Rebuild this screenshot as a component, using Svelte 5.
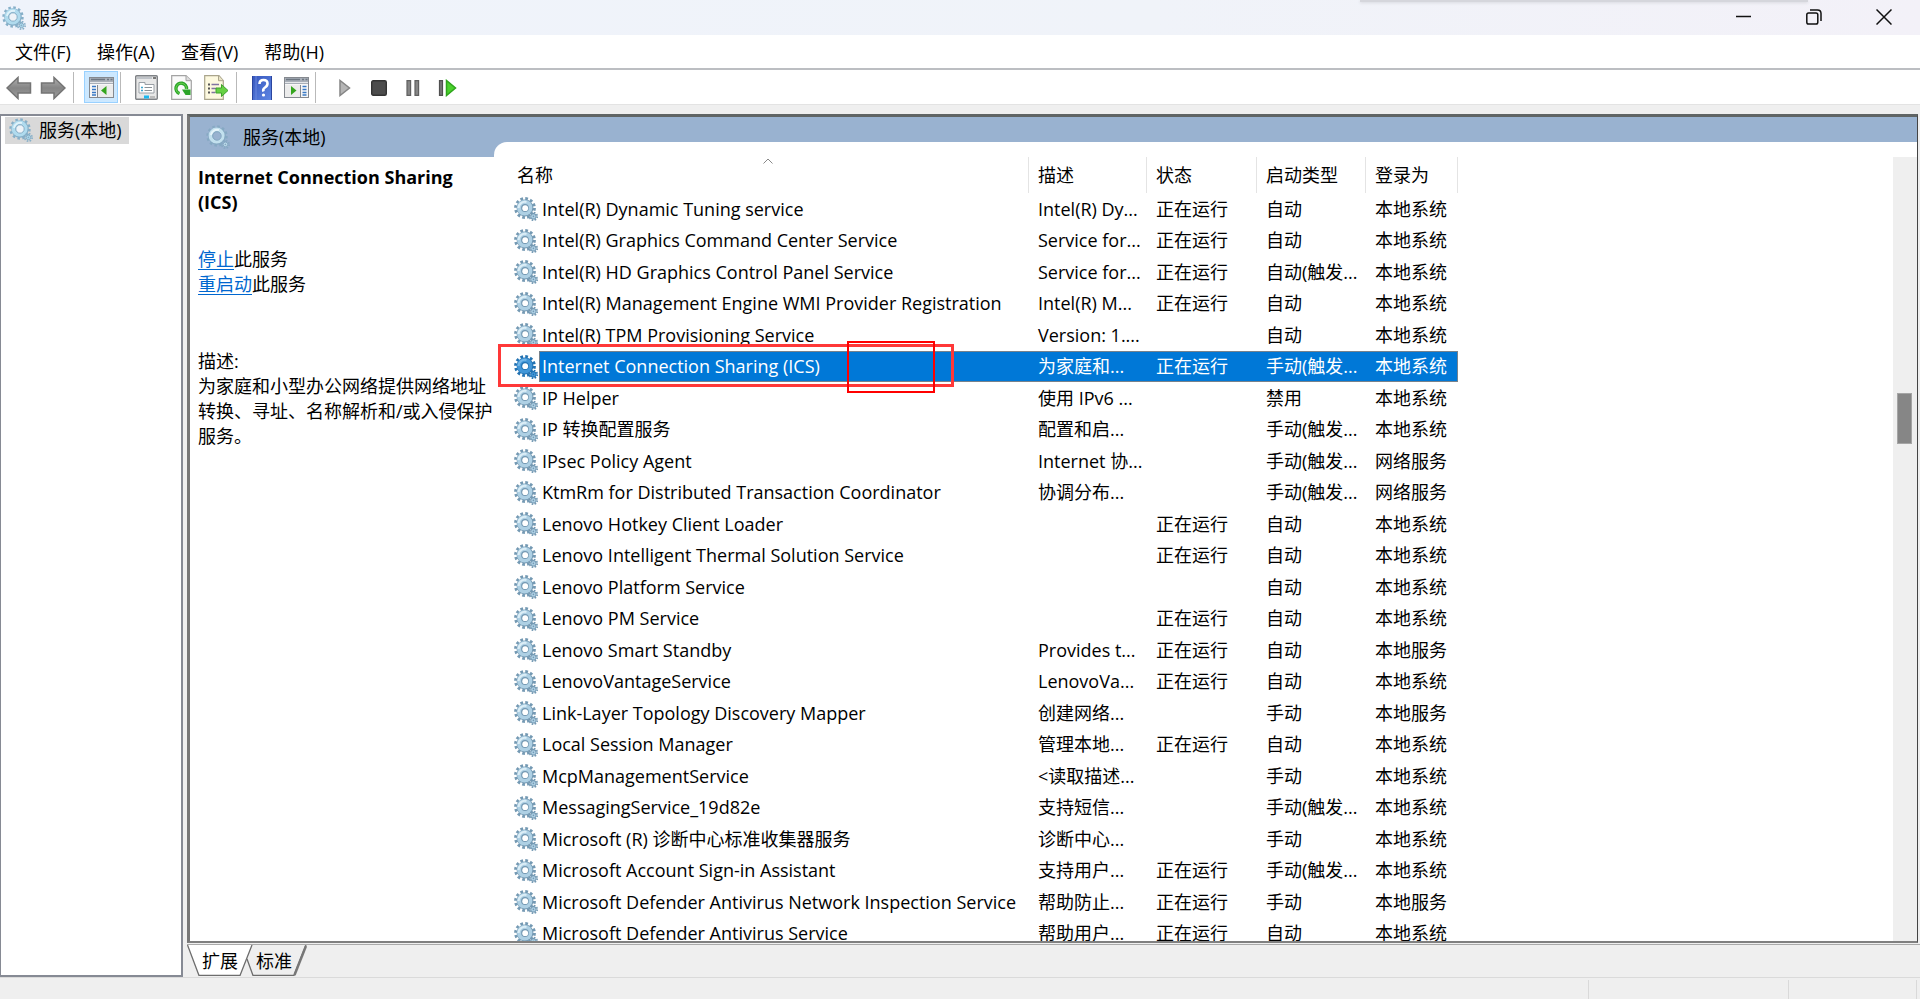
<script>
  const RUN = '正在运行';
  const SYS = '本地系统';
  const NET = '网络服务';
  const LOC = '本地服务';
  const AUTO = '自动';
  const MAN = '手动';
  const MANT = '手动(触发...';

  const services = [
    ['Intel(R) Dynamic Tuning service', 'Intel(R) Dy...', RUN, AUTO, SYS],
    ['Intel(R) Graphics Command Center Service', 'Service for...', RUN, AUTO, SYS],
    ['Intel(R) HD Graphics Control Panel Service', 'Service for...', RUN, '自动(触发...', SYS],
    ['Intel(R) Management Engine WMI Provider Registration', 'Intel(R) M...', RUN, AUTO, SYS],
    ['Intel(R) TPM Provisioning Service', 'Version: 1....', '', AUTO, SYS],
    ['Internet Connection Sharing (ICS)', '为家庭和...', RUN, MANT, SYS],
    ['IP Helper', '使用 IPv6 ...', '', '禁用', SYS],
    ['IP 转换配置服务', '配置和启...', '', MANT, SYS],
    ['IPsec Policy Agent', 'Internet 协...', '', MANT, NET],
    ['KtmRm for Distributed Transaction Coordinator', '协调分布...', '', MANT, NET],
    ['Lenovo Hotkey Client Loader', '', RUN, AUTO, SYS],
    ['Lenovo Intelligent Thermal Solution Service', '', RUN, AUTO, SYS],
    ['Lenovo Platform Service', '', '', AUTO, SYS],
    ['Lenovo PM Service', '', RUN, AUTO, SYS],
    ['Lenovo Smart Standby', 'Provides t...', RUN, AUTO, LOC],
    ['LenovoVantageService', 'LenovoVa...', RUN, AUTO, SYS],
    ['Link-Layer Topology Discovery Mapper', '创建网络...', '', MAN, LOC],
    ['Local Session Manager', '管理本地...', RUN, AUTO, SYS],
    ['McpManagementService', '<读取描述...', '', MAN, SYS],
    ['MessagingService_19d82e', '支持短信...', '', MANT, SYS],
    ['Microsoft (R) 诊断中心标准收集器服务', '诊断中心...', '', MAN, SYS],
    ['Microsoft Account Sign-in Assistant', '支持用户...', RUN, MANT, SYS],
    ['Microsoft Defender Antivirus Network Inspection Service', '帮助防止...', RUN, MAN, LOC],
    ['Microsoft Defender Antivirus Service', '帮助用户...', RUN, AUTO, SYS]
  ];
  const selected = 5;
  const menus = ['文件(F)', '操作(A)', '查看(V)', '帮助(H)'];
</script>

{#snippet gear(kind)}<svg class="gear {kind}" viewBox="0 0 24 24" aria-hidden="true"><use href={kind === 'soft' || kind === 'faint' ? '#gear-ring' : '#gear'} /></svg>{/snippet}

<svg class="defs" aria-hidden="true">
  <defs>
    <linearGradient id="metal" x1="0" y1="0" x2="0" y2="1">
      <stop offset="0" stop-color="#b0b0b0" /><stop offset=".5" stop-color="#858585" /><stop offset="1" stop-color="#9d9d9d" />
    </linearGradient>
    <linearGradient id="blue" x1="0" y1="0" x2="1" y2="1">
      <stop offset="0" stop-color="#3656bd" /><stop offset="1" stop-color="#5f87e4" />
    </linearGradient>
    <symbol id="gear" viewBox="0 0 24 24">
      <circle cx="11" cy="11" r="9.4" fill="none" stroke="var(--edge)" stroke-width="3" stroke-dasharray="2.7 2.22" />
      <circle cx="11" cy="11" r="8.4" fill="var(--edge)" />
      <circle cx="10.700" cy="10.700" r="7.700" fill="var(--body)" />
      <path d="M4.500 11a6.300 6.300 0 0 1 8-6" fill="none" stroke="var(--shine)" stroke-width="2.200" />
      <circle cx="11" cy="11" r="3.900" fill="var(--edge)" />
      <circle cx="11.200" cy="11.200" r="2.900" fill="var(--hole)" />
      <circle cx="19.400" cy="19.400" r="3.800" fill="none" stroke="var(--edge)" stroke-width="1.800" stroke-dasharray="1.600 1.380" />
      <circle cx="19.400" cy="19.400" r="3.100" fill="var(--edge)" />
      <circle cx="19.400" cy="19.400" r="2.200" fill="var(--body)" />
      <circle cx="19.400" cy="19.400" r=".8" fill="var(--edge)" />
    </symbol>
    <symbol id="gear-ring" viewBox="0 0 24 24">
      <circle cx="11" cy="11" r="9.400" fill="none" stroke="var(--edge)" stroke-width="2.600" stroke-dasharray="2.500 2.420" />
      <circle cx="11" cy="11" r="6.400" fill="none" stroke="var(--edge)" stroke-width="4.800" />
      <circle cx="10.600" cy="10.600" r="6.200" fill="none" stroke="var(--body)" stroke-width="3.600" />
      <path d="M5 10a6.300 6.300 0 0 1 8-5" fill="none" stroke="var(--shine)" stroke-width="2" />
      <circle cx="11" cy="11" r="4.200" fill="var(--hole)" stroke="var(--edge)" />
      <circle cx="19.400" cy="19.400" r="3.700" fill="none" stroke="var(--edge)" stroke-width="1.800" stroke-dasharray="1.600 1.300" />
      <circle cx="19.400" cy="19.400" r="2.300" fill="var(--body)" stroke="var(--edge)" />
      <circle cx="19.400" cy="19.400" r=".9" fill="var(--edge)" />
    </symbol>
  </defs>
</svg>

<div class="window">
  <header class="titlebar">
    <span class="shade"></span>
    {@render gear('soft')}
    <h1>服务</h1>
    <div class="controls">
      <button aria-label="最小化"><svg width="16" height="16"><path d="M0 7.500h15" /></svg></button>
      <button aria-label="还原"><svg width="16" height="16"><rect x=".8" y="4" width="11" height="11" rx="1.800" /><path d="M4 1h7.500q3.500 0 3.500 3.500V12" /></svg></button>
      <button aria-label="关闭"><svg width="16" height="16"><path d="M.5 .5l15 15M15.500 .5l-15 15" /></svg></button>
    </div>
  </header>

  <nav class="menubar">
    {#each menus as m}<button>{m}</button>{/each}
  </nav>

  <div class="toolbar" role="toolbar">
    <button aria-label="后退"><svg width="26" height="24" viewBox="0 0 26 24"><path d="M1 12L12 1.500V7h12.500v10H12v5.500z" fill="url(#metal)" stroke="#747474" stroke-width="1.500" /></svg></button>
    <button aria-label="前进"><svg width="26" height="24" viewBox="0 0 26 24"><path d="M25 12L14 1.500V7H1.500v10H14v5.500z" fill="url(#metal)" stroke="#747474" stroke-width="1.500" /></svg></button>
    <i></i>
    <button class="on" aria-label="显示/隐藏控制台树">
      <svg width="25" height="21" viewBox="0 0 25 21"><rect x=".5" y=".5" width="24" height="20" fill="#f7f7f7" stroke="#85898f" /><rect x="1" y="1" width="23" height="6" fill="#a9afb8" /><path d="M2 2.500h14M18 2.500h2M21.500 2.500h2" stroke="#6e7782" stroke-width="1.500" /><path d="M1 5.500h23" stroke="#e5e7ea" /><path d="M8.500 8v12" stroke="#85898f" /><path d="M3 9.500h4M3 12.500h4M3 15.500h4M3 18h4" stroke="#3979c5" stroke-width="1.500" /><path d="M9 8h15v12H9z" fill="#ececec" /><path d="M17.500 9v9L12 13.500z" fill="#35a51e" /></svg>
    </button>
    <i></i>
    <button class="view" aria-label="属性">
      <svg width="23" height="25" viewBox="0 0 23 25"><rect x=".7" y=".7" width="21.600" height="23.600" rx="1" fill="#e8e8e8" stroke="#7f8286" stroke-width="1.400" /><path d="M2 3h15" stroke="#bfc3c8" stroke-width="2" /><path d="M18 3h3" stroke="#555" stroke-width="1.500" /><path d="M4 18V7.500h6V9.500h9V18z" fill="#fff" stroke="#9aa0a6" /><path d="M6 12.500h2M6 15.500h2" stroke="#3ca4cf" stroke-width="1.500" /><path d="M9.500 12.500H17M9.500 15.500H17" stroke="#8b9197" /><path d="M9 22h5" stroke="#1ab8f0" stroke-width="3" /><path d="M15 22h5" stroke="#bcbcbc" stroke-width="2" /></svg>
    </button>
    <button class="view" aria-label="刷新">
      <svg width="21" height="25" viewBox="0 0 21 25"><path d="M.7 .7h14.300l5.300 5v18.600H.7z" fill="#fafafa" stroke="#a3a3a3" stroke-width="1.200" /><path d="M15 .7v5h5.300" fill="#ddd" stroke="#a3a3a3" /><path d="M8.500 18.500A5.300 5.300 0 1 1 15.500 14" fill="none" stroke="#2da52a" stroke-width="3.400" /><path d="M8.500 18.500A5.300 5.300 0 1 1 15.500 14" fill="none" stroke="#68d44f" stroke-width="1" /><path d="M11 14.500h8.500v5.500h-5z" fill="#2da52a" /></svg>
    </button>
    <button class="view" aria-label="导出列表">
      <svg width="25" height="25" viewBox="0 0 25 25"><path d="M.7 .7h14.300l4.300 5v18.600H.7z" fill="#fdf9df" stroke="#aaa58c" stroke-width="1.200" /><path d="M14.500 .7v5h4.800" fill="#e8e3c5" stroke="#aaa58c" /><path d="M4 9.500h2M4 13.500h2M4 17.500h2" stroke="#555" stroke-width="2" /><path d="M7.500 9.500H15M7.500 13.500h5M7.500 17.500h4" stroke="#8174a0" stroke-width="1.400" /><path d="M12 13h5.500V9.500L24 15.500l-6.500 6V18H12z" fill="#67d143" stroke="#3fa22d" /></svg>
    </button>
    <i class="mid"></i>
    <button class="view" aria-label="帮助">
      <svg width="20" height="24" viewBox="0 0 20 24"><rect width="20" height="24" fill="url(#blue)" /><path d="M.5 0v24M19.500 0v24" stroke="#2b459f" /><path d="M4 0v24" stroke="#6a87dd" /><path d="M7.500 8q0-4 4-4t4 3.500q0 2.500-2.500 4T11.500 15.500" fill="none" stroke="#fff" stroke-width="2.600" /><circle cx="11.500" cy="19" r="1.600" fill="#fff" /></svg>
    </button>
    <button class="view" aria-label="显示/隐藏操作窗格">
      <svg width="25" height="21" viewBox="0 0 25 21"><rect x=".5" y=".5" width="24" height="20" fill="#f7f7f7" stroke="#85898f" /><rect x="1" y="1" width="23" height="6" fill="#a9afb8" /><path d="M2 2.500h14M18 2.500h2M21.500 2.500h2" stroke="#6e7782" stroke-width="1.500" /><path d="M1 5.500h23" stroke="#e5e7ea" /><path d="M1 8h15v12H1z" fill="#ececec" /><path d="M16.500 8v12" stroke="#85898f" /><path d="M18.500 9.500h4M18.500 12.500h4M18.500 15.500h4M18.500 18h4" stroke="#3979c5" stroke-width="1.500" /><path d="M7 9v9l5.500-4.500z" fill="#35a51e" /></svg>
    </button>
    <i class="last"></i>
    <button aria-label="启动服务"><svg width="12" height="18" viewBox="0 0 12 18"><path d="M1 1.500v15L10.500 9z" fill="#b5b5b5" stroke="#858585" stroke-width="1.500" /></svg></button>
    <button aria-label="停止服务"><svg width="16" height="16" viewBox="0 0 16 16"><rect x=".7" y=".7" width="14.600" height="14.600" rx="1.500" fill="#4c4c4c" stroke="#333" stroke-width="1.400" /></svg></button>
    <button aria-label="暂停服务"><svg width="14" height="16" viewBox="0 0 14 16"><path d="M1 .7h3.600v14.600H1zM9 .7h3.600v14.600H9z" fill="#858585" stroke="#606060" stroke-width="1.200" /></svg></button>
    <button aria-label="重启动服务"><svg width="19" height="18" viewBox="0 0 19 18"><path d="M1.500 1.700h3v14.600h-3z" fill="#777" stroke="#505050" stroke-width="1.200" /><path d="M8.500 1.500v15L17.500 9z" fill="#4bd12c" stroke="#2ea51c" stroke-width="1.500" /></svg></button>
  </div>

  <main>
    <aside class="tree"><a href="#services">{@render gear('soft')}<span>服务(本地)</span></a></aside>

    <section class="right" id="services">
      <div class="pane">
        <div class="info">
          <div class="banner">{@render gear('faint')}<span>服务(本地)</span></div>
          <div class="details">
            <h2>Internet Connection Sharing (ICS)</h2>
            <p class="actions"><a href="#stop">停止</a>此服务<br /><a href="#restart">重启动</a>此服务</p>
            <p>描述:<br />为家庭和小型办公网络提供网络地址转换、寻址、名称解析和/或入侵保护服务。</p>
          </div>
        </div>
        <div class="list">
          <div class="scroller">
            <table>
              <colgroup><col class="c1" /><col class="c2" /><col class="c3" /><col class="c4" /><col class="c5" /></colgroup>
              <thead>
                <tr>
                  <th class="name">名称<svg class="sort" width="10" height="6"><path d="M.5 5.500L5 1l4.500 4.500" /></svg></th>
                  <th>描述</th><th>状态</th><th>启动类型</th><th>登录为</th>
                </tr>
              </thead>
              <tbody>
                {#each services as s, i}
                  <tr class:selected={i === selected}>
                    <td class="name">
                      <div class="cell">{@render gear(i === selected ? 'picked' : '')}<span class="text">{s[0]}</span></div>
                      {#if i === selected}<span class="mark thick"></span><span class="mark thin"></span>{/if}
                    </td>
                    {#each s.slice(1) as v}<td>{v}</td>{/each}
                  </tr>
                {/each}
              </tbody>
            </table>
          </div>
          <div class="track"><div class="thumb"></div></div>
        </div>
      </div>
      <div class="tabs">
        <button class="tab front"><svg width="66" height="31" viewBox="0 0 66 31"><path d="M0 0L12 30.500H53L65 0z" fill="#fff" /><path d="M.5 0L12 30.500H53L65 0" fill="none" stroke="#6d6d6d" stroke-width="1.300" /></svg><span>扩展</span></button>
        <button class="tab"><svg width="66" height="31" viewBox="0 0 66 31"><path d="M6 14L12 30.500H53L65 0" fill="none" stroke="#6d6d6d" stroke-width="1.300" /><path d="M53.500 30L65 1" stroke="#777" stroke-width="2.500" /></svg><span>标准</span></button>
      </div>
    </section>
  </main>
  <footer><span></span><span></span><span></span></footer>
</div>

<style>
  :global(body) { margin: 0; overflow: hidden; }
  .defs { position: absolute; width: 0; height: 0; }
  .window {
    display: flex; flex-direction: column; height: 100vh; background: #efefef; color: #000;
    font: 18px/25px "Open Sans", "Noto Sans CJK SC", sans-serif;
  }
  button { border: 0; padding: 0; background: none; font: inherit; color: inherit; }
  .gear {
    --edge: #7499b3; --body: #aed0e4; --shine: #dceef7; --hole: #fff;
    width: 24px; height: 24px; flex: none; display: block;
  }
  .gear.soft { --edge: #86afc8; --body: #b0dbee; --shine: #dff2fa; --hole: #eef3f8; }
  .gear.faint { --edge: #86a9c3; --body: #c2e0ee; --shine: #e6f4fa; --hole: #99b2d0; }
  .gear.picked { --edge: #2272b2; --body: #4297d8; --shine: #72b6e8; }

  .titlebar { position: relative; display: flex; align-items: center; height: 35px; flex: none; padding-left: 2px; gap: 6px; background: linear-gradient(90deg, #eff3fb, #f0f3f9 60%, #f3f1f8); }
  h1 { flex: 1; margin: 0; padding-top: 2px; font-size: 18px; font-weight: 400; }
  .shade { position: absolute; top: 0; right: 112px; width: 448px; height: 2px; background: #d5d6dc; box-shadow: 0 1px 3px #d5d6dc; }
  .controls { display: flex; padding: 0 1px 2px 0; }
  .controls button { width: 70px; height: 33px; display: grid; place-items: center; }
  .controls path, .controls rect { fill: none; stroke: #111; stroke-width: 1.5; }

  .menubar { display: flex; gap: 26px; height: 31px; flex: none; padding: 2px 0 0 15px; background: #fff; border-bottom: 2px solid #bcbec2; }
  .toolbar { display: flex; align-items: center; height: 34px; flex: none; padding-left: 2px; background: #fff; border-bottom: 1px solid #e3e3e3; }
  .toolbar button { width: 34px; height: 32px; padding-top: 1px; display: grid; place-items: center; }
  .toolbar .view { width: 35px; }
  .toolbar i { width: 1px; height: 31px; background: #b9b9b9; margin: 0 10px 0 3px; }
  .toolbar .on { background: #cce8ff; box-shadow: inset 0 0 0 1px #99d1ff; }
  .toolbar .on + i { margin: 0 8px 0 2px; }
  .toolbar i.mid { margin: 0 7px 0 2px; }
  .toolbar i.last { margin: 0 12px 0 1px; }

  main { flex: 1; min-height: 0; display: flex; gap: 4px; padding-top: 9px; }
  .tree { box-sizing: border-box; width: 183px; flex: none; border: 2px solid #868a94; border-left-width: 1px; background: #fff; }
  .tree a { display: flex; gap: 6px; width: 116px; margin: 1px 0 0 4px; padding: 1px 4px; background: #d9d9d9; color: inherit; text-decoration: none; white-space: nowrap; }

  .right { flex: 1; min-width: 0; display: flex; flex-direction: column; }
  .pane { flex: 1; min-height: 0; display: flex; margin-right: 2px; background: #99b2d0; border: 3px solid #777; border-top-color: #5f6464; border-right: 1px solid #444; border-bottom: 2px solid #808080; }
  .info { width: 304px; flex: none; display: flex; flex-direction: column; }
  .banner { height: 40px; flex: none; display: flex; align-items: center; gap: 13px; padding-left: 16px; }
  .details { flex: 1; padding: 8px 0 0 8px; background: #fff; }
  h2 { margin: 0; font-size: 18px; line-height: 25px; font-weight: 700; }
  p { margin: 0; }
  .details .actions { margin: 32px 0 52px; }
  .actions a { color: #0067cf; text-underline-offset: 3px; }

  .list { flex: 1; min-width: 0; display: flex; margin-top: 25px; padding-top: 15px; background: #fff; border-top-left-radius: 13px; }
  .scroller { flex: 1; min-width: 0; overflow: hidden; }
  table { border-collapse: separate; border-spacing: 0; table-layout: fixed; width: 964px; }
  .c1 { width: 535px; } .c2 { width: 118px; } .c3 { width: 110px; } .c4 { width: 109px; } .c5 { width: 92px; }
  th, td { box-sizing: border-box; white-space: nowrap; }
  th { height: 36px; padding: 1px 0 0 9px; text-align: left; font-weight: 400; border-right: 1px solid #e4e4e4; position: relative; }
  th.name { padding-left: 23px; }
  .sort { position: absolute; left: 269px; top: 1px; }
  .sort path { fill: none; stroke: #888; }
  td { height: 32px; padding: 0 0 0 9px; }
  tr:nth-child(even) td { height: 31px; }
  td.name { position: relative; padding-left: 20px; }
  .cell { display: flex; align-items: center; height: 31px; }
  .text { flex: 1; padding-left: 4px; line-height: 31px; }
  .selected td:not(.name), .selected .text { background: #0078d7; color: #fff; border: solid #77828c; border-width: 1px 0; }
  .selected .text { border-left-width: 1px; margin-left: 1px; padding-left: 2px; line-height: 29px; }
  .selected td:last-child { border-right-width: 1px; }
  .mark { position: absolute; z-index: 1; box-sizing: border-box; }
  .thick { left: 4px; top: -7px; width: 456px; height: 43px; border: 3px solid #ff3838; }
  .thin { left: 353px; top: -10px; width: 88px; height: 52px; border: 2px solid #f00; }
  .track { width: 15px; flex: none; padding: 236px 5px 0 4px; background: #efefef; }
  .thumb { height: 51px; background: #868686; box-shadow: inset 0 0 0 1px #a5a5a5; }

  .tabs { display: flex; height: 33px; flex: none; margin-top: 1px; border-top: 1px solid #aaa; box-sizing: border-box; }
  .tab { position: relative; width: 54px; height: 31px; padding: 1px 0 0 12px; }
  .front { z-index: 1; }
  .tab svg { position: absolute; left: 0; top: 0; }
  .tab span { position: relative; }

  footer { height: 22px; flex: none; display: flex; justify-content: flex-end; border-top: 1px solid #dadada; padding: 2px 3px 0 0; box-sizing: border-box; }
  footer span { width: 127px; border-right: 1px solid #d9d9d9; }
  footer span:nth-child(2) { width: 199px; }
</style>
